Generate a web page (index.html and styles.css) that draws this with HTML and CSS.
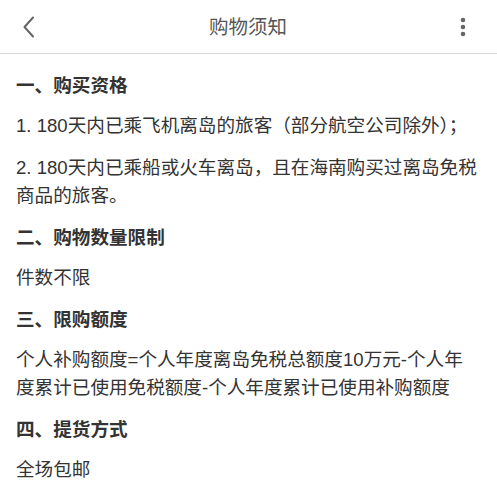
FILE: index.html
```html
<!DOCTYPE html>
<html lang="zh-CN">
<head>
<meta charset="utf-8">
<title>购物须知</title>
<link rel="stylesheet" href="styles.css">
</head>
<body>
<header class="navbar">
  <span class="nav-back">
    <svg width="14" height="22" viewBox="0 0 14 22"><path d="M11 1.5 L2.5 11 L11 20.5" fill="none" stroke="#666" stroke-width="2" stroke-linecap="round" stroke-linejoin="round"/></svg>
  </span>
  <h1 class="nav-title">购物须知</h1>
  <span class="nav-more">
    <svg width="6" height="20" viewBox="0 0 6 20"><circle cx="3" cy="3" r="2.3" fill="#666"/><circle cx="3" cy="10" r="2.3" fill="#666"/><circle cx="3" cy="17" r="2.3" fill="#666"/></svg>
  </span>
</header>
<main class="content">
  <h2 class="sec-title">一、购买资格</h2>
  <p class="sec-text">1. 180天内已乘飞机离岛的旅客（部分航空公司除外）；</p>
  <p class="sec-text">2. 180天内已乘船或火车离岛，且在海南购买过离岛免税商品的旅客。</p>
  <h2 class="sec-title">二、购物数量限制</h2>
  <p class="sec-text">件数不限</p>
  <h2 class="sec-title">三、限购额度</h2>
  <p class="sec-text">个人补购额度=个人年度离岛免税总额度10万元-个人年度累计已使用免税额度-个人年度累计已使用补购额度</p>
  <h2 class="sec-title">四、提货方式</h2>
  <p class="sec-text">全场包邮</p>
</main>
</body>
</html>
```
FILE: styles.css
```css
* { box-sizing: border-box; }
html, body {
  margin: 0;
  padding: 0;
  background: #fff;
}
body {
  font-family: "Liberation Sans", "Noto Sans CJK SC", sans-serif;
  color: #333;
}
.navbar {
  height: 54px;
  border-bottom: 1px solid #d9d9d9;
  display: flex;
  align-items: center;
  justify-content: space-between;
  padding: 0 31px 0 22px;
}
.nav-back {
  display: flex;
  width: 14px;
  height: 22px;
}
.nav-more {
  display: flex;
  width: 6px;
  height: 20px;
}
.nav-title {
  margin: 0;
  font-size: 19.5px;
  font-weight: normal;
  color: #555;
  line-height: 26px;
}
.content {
  padding: 18px 16px 0 16px;
}
.sec-title {
  margin: 0 0 12px;
  font-size: 18.6px;
  font-weight: bold;
  line-height: 28px;
  color: #333;
}
.sec-text {
  margin: 0 0 14px;
  font-size: 18.6px;
  line-height: 28px;
  color: #333;
}
```
